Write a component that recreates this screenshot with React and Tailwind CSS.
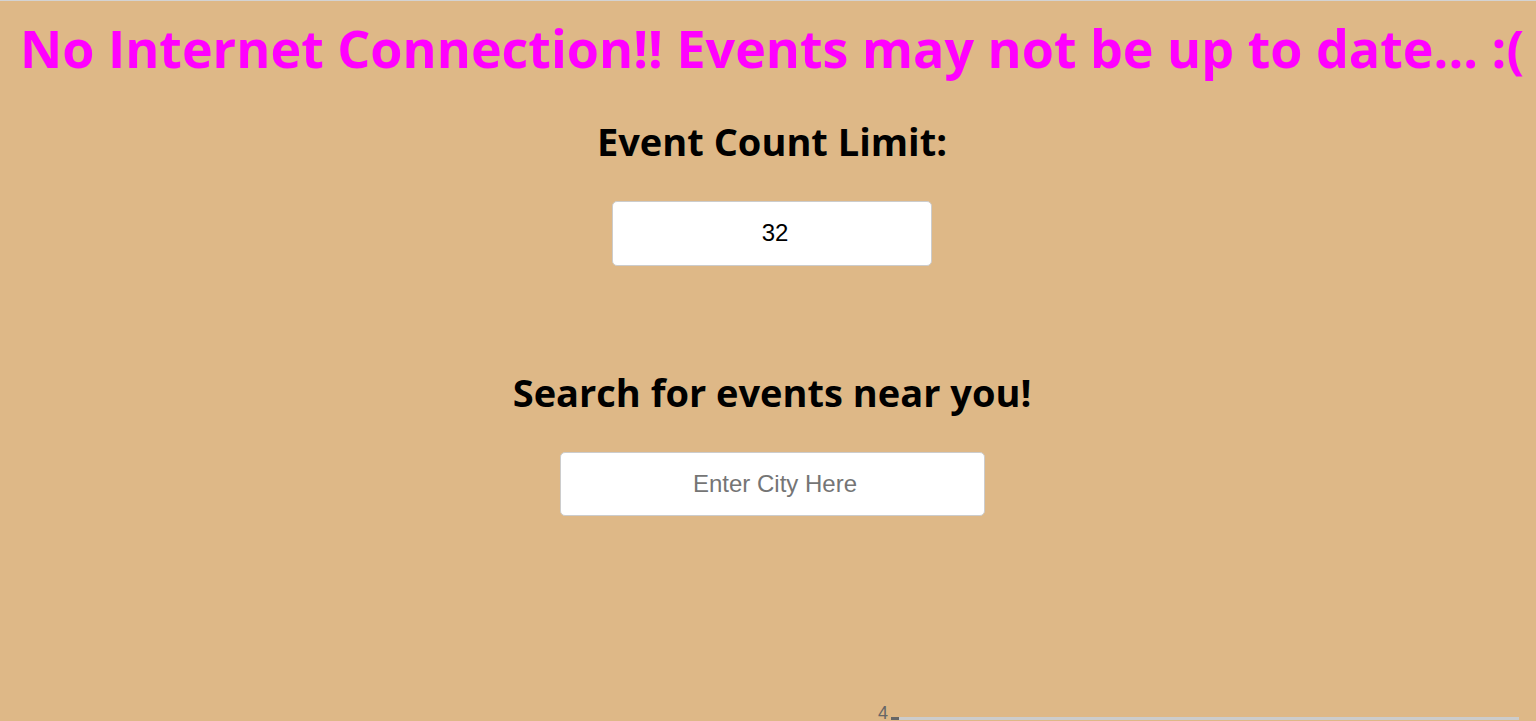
import React, { useState } from "react";

export default function App() {
  const [limit, setLimit] = useState("32");
  const [city, setCity] = useState("");

  return (
    <div className="min-h-screen bg-[#deb887] border-t border-[#d3d3d3] pl-[8px] font-['Open_Sans',sans-serif] overflow-hidden">
      {/* Offline warning */}
      <h1 className="text-center text-[52px] leading-[1.2] font-bold text-[#ff00ff] pt-[16px] whitespace-nowrap">
        No Internet Connection!! Events may not be up to date... :(
      </h1>

      {/* Event count */}
      <div className="flex flex-col items-center mt-[39px]">
        <h2 className="text-[38px] font-bold text-black leading-tight">Event Count Limit:</h2>
        <input
          type="text"
          inputMode="numeric"
          value={limit}
          onChange={(e) => setLimit(e.target.value)}
          className="mt-[35px] w-[320px] h-[65px] bg-white border border-[#cccccc] rounded-[5px] pl-[6px] text-center text-[24px] text-black font-['Liberation_Sans',sans-serif] outline-none"
        />
      </div>

      {/* City search */}
      <div className="flex flex-col items-center mt-[103px]">
        <h2 className="text-[38px] font-bold text-black leading-tight">Search for events near you!</h2>
        <input
          type="text"
          value={city}
          onChange={(e) => setCity(e.target.value)}
          placeholder="Enter City Here"
          className="mt-[36px] w-[425px] h-[64px] bg-white border border-[#cccccc] rounded-[5px] pl-[6px] text-center text-[24px] text-black placeholder:text-[#757575] font-['Liberation_Sans',sans-serif] outline-none"
        />
      </div>

      {/* Chart axis peeking in at bottom */}
      <div className="flex items-end mt-[188px] ml-[870px] gap-[3px]">
        <span className="text-[18px] leading-none text-[#666666] font-['Liberation_Sans',sans-serif]">4</span>
        <div className="w-[628px] h-[3px] bg-[#cccccc] mb-[2px] border-l-[8px] border-[#666666]" />
      </div>
    </div>
  );
}
